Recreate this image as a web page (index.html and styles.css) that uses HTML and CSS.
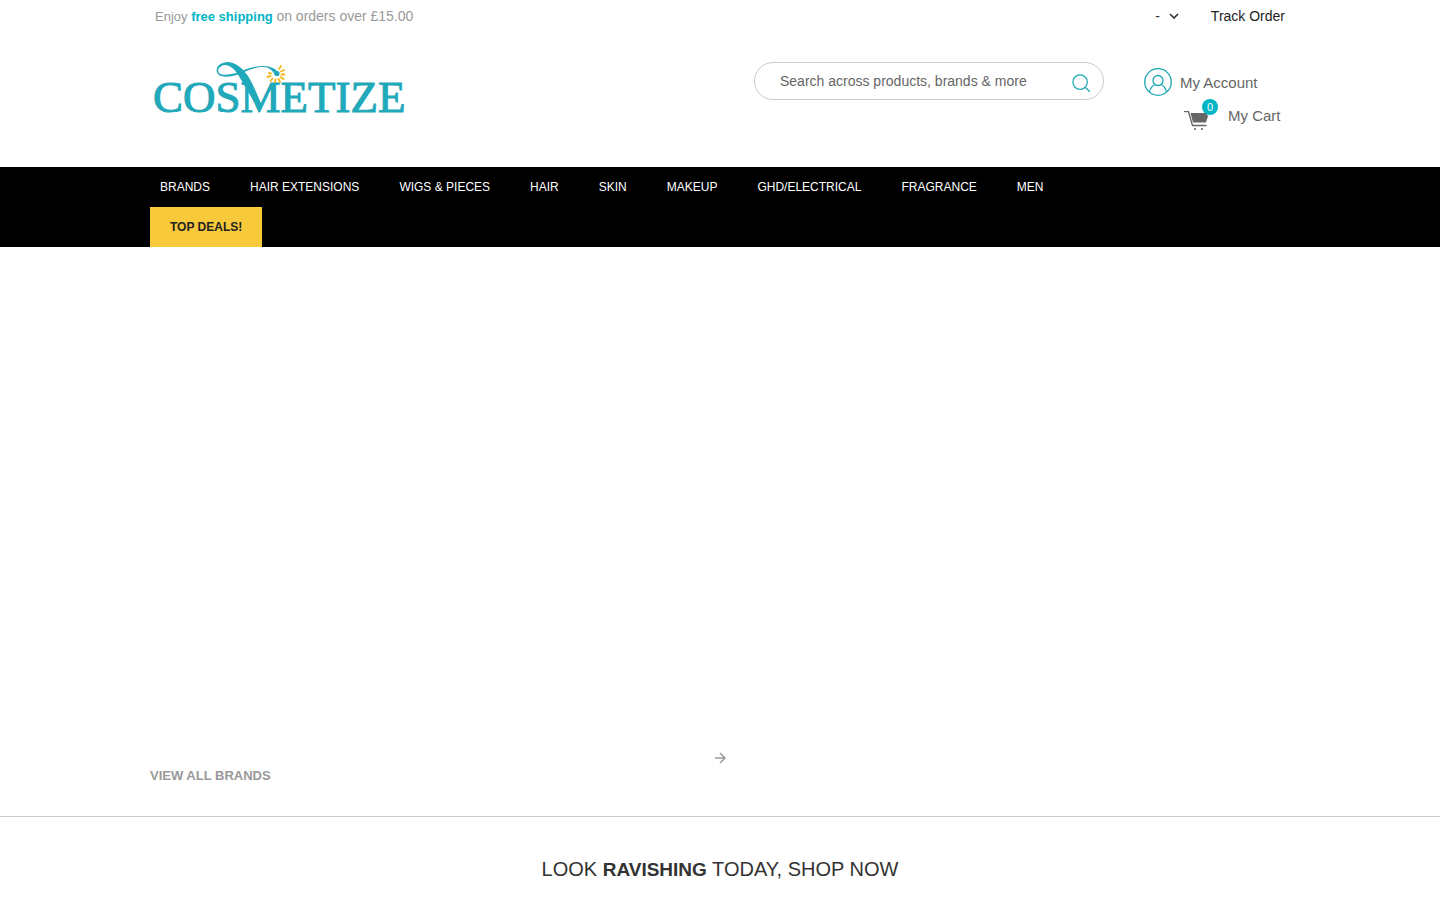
FILE: index.html
```html
<!DOCTYPE html>
<html lang="en">
<head>
  <meta charset="UTF-8">
  <meta name="viewport" content="width=device-width, initial-scale=1.0">
  <title>Cosmetize</title>
  <link rel="stylesheet" href="styles.css">
</head>
<body>
  <header>
    <div class="container topbar">
      <p class="shipping">Enjoy <strong>free shipping</strong> <span>on orders over £15.00</span></p>
      <div class="top-links">
        <button type="button" class="currency" aria-label="Currency">
          <span>-</span>
          <svg width="10" height="6" viewBox="0 0 10 6"><path d="M1 1l4 4 4-4" fill="none" stroke="#333" stroke-width="1.7"/></svg>
        </button>
        <a href="#" class="track">Track Order</a>
      </div>
    </div>

    <div class="container masthead">
      <a href="#" class="logo" aria-label="Cosmetize">
        <svg width="270" height="66" viewBox="0 0 270 66">
          <text x="3" y="50" class="logo-text">COSMETIZE</text>
          <path class="logo-fill" d="M110 50L90 16C86 8 80 3 75 3C69 4 67 8 69 11C72 14 80 13 89 10C97 7 104 4 113 4C121 4 126 7 129 11L126 14C122 8 119 5 113 5C104 5 97 9 90 12C81 15 71 16 68 12C64 7 69 0 78 0C87 1 92 6 98 14C103 22 108 34 112 44Z"/>
          <circle class="logo-fill" cx="127" cy="11.500" r="2.600"/>
          <path d="M129 7l2-3M131 9.500l3-1.500M131.500 12.500h3M130.500 15l3 2M128.500 17l1.500 3M125.500 17.500l-.5 2.500M122.500 16.500l-2 2.500M120.500 14l-3 1M121 11.500l-2-.5" stroke="#f5b81c" stroke-width="1.900" stroke-linecap="round"/>
        </svg>
      </a>
      <form class="search">
        <input type="text" name="q" aria-label="Search" placeholder="Search across products, brands &amp; more">
        <button type="submit" aria-label="Search">
          <svg width="18" height="18" viewBox="0 0 20 20" fill="none" stroke="#1ba8b5" stroke-width="1.4"><circle cx="9" cy="9" r="8"/><path d="M15 15l5 5"/></svg>
        </button>
      </form>
      <div class="user-links">
        <a href="#" class="account">
          <svg width="28" height="28" viewBox="0 0 28 28" fill="none" stroke="#1ba8b5" stroke-width="1.3"><circle cx="14" cy="14" r="13.3"/><circle cx="14" cy="12.5" r="5"/><path d="M5.500 24c1-4 3-6.500 5.500-7.500M22.500 24c-1-4-3-6.500-5.500-7.500"/></svg>
          My Account
        </a>
        <a href="#" class="cart">
          <span class="cart-icon">
            <svg width="25" height="22" viewBox="0 0 25 22"><path d="M0 2.700h4.500l4 13.800h14" fill="none" stroke="#666" stroke-width="1.300"/><path d="M6.500 4h15.500l2 3-2 6.500H9z" fill="#666"/><circle cx="11" cy="20" r="1.100" fill="#666"/><circle cx="18" cy="20" r="1.100" fill="#666"/></svg>
            <span class="badge">0</span>
          </span>
          My Cart
        </a>
      </div>
    </div>

    <nav class="nav">
      <div class="container">
        <ul class="menu">
          <li><a href="#">BRANDS</a></li>
          <li><a href="#">HAIR EXTENSIONS</a></li>
          <li><a href="#">WIGS &amp; PIECES</a></li>
          <li><a href="#">HAIR</a></li>
          <li><a href="#">SKIN</a></li>
          <li><a href="#">MAKEUP</a></li>
          <li><a href="#">GHD/ELECTRICAL</a></li>
          <li><a href="#">FRAGRANCE</a></li>
          <li><a href="#">MEN</a></li>
          <li><a href="#" class="deals">TOP DEALS!</a></li>
        </ul>
      </div>
    </nav>
  </header>

  <main>
    <section class="banner"></section>
    <section class="brands">
      <div class="container">
        <button type="button" class="next" aria-label="Next">
          <svg width="12" height="12" viewBox="0 0 12 12"><path d="M1 6h9M6 1l5 5-5 5" fill="none" stroke="#999" stroke-width="1.500"/></svg>
        </button>
        <a href="#" class="view-all">VIEW ALL BRANDS</a>
      </div>
    </section>
    <h2>LOOK <strong>RAVISHING</strong> TODAY, SHOP NOW</h2>
  </main>
</body>
</html>
```

FILE: styles.css
```css
* {
  box-sizing: border-box;
}
body {
  margin: 0;
  font-family: "Liberation Sans", Arial, sans-serif;
  font-size: 14px;
  color: #333;
  background: #fff;
}
a {
  color: inherit;
  text-decoration: none;
}
button {
  padding: 0;
  border: none;
  background: none;
  font: inherit;
  color: inherit;
  cursor: pointer;
}
svg {
  display: block;
}
.container {
  max-width: 1140px;
  margin: 0 auto;
}

/* top bar */
.topbar {
  display: flex;
  justify-content: space-between;
  align-items: center;
  height: 32px;
  padding: 0 5px;
}
.shipping {
  margin: 0;
  font-size: 13px;
  color: #999;
}
.shipping strong {
  color: #00b5c4;
}
.shipping span {
  font-size: 14px;
}
.top-links {
  display: flex;
  align-items: center;
  gap: 32px;
}
.currency {
  display: flex;
  align-items: center;
  gap: 9px;
}
.track {
  color: #222;
}

/* logo, search, account */
.masthead {
  display: flex;
  align-items: flex-start;
  height: 135px;
  padding-top: 30px;
}
.logo {
  margin-right: auto;
}
.logo-text {
  font-family: "Liberation Serif", "Times New Roman", serif;
  font-size: 45px;
  fill: #1fa9ba;
  stroke: #1fa9ba;
  stroke-width: 1px;
}
.logo-fill {
  fill: #1fa9ba;
}
.search {
  display: flex;
  align-items: center;
  width: 350px;
  height: 38px;
  padding: 0 13px 0 25px;
  border: 1px solid #ccc;
  border-radius: 19px;
}
.search input {
  flex: 1;
  min-width: 0;
  padding: 0;
  border: none;
  outline: none;
  background: none;
  font: inherit;
}
.search input::placeholder {
  color: #666;
  opacity: 1;
}
.search button {
  padding-top: 3px;
}
.user-links {
  width: 146px;
  margin-left: 40px;
  padding-top: 6px;
  font-size: 15px;
  color: #666;
}
.account {
  display: flex;
  align-items: center;
  gap: 8px;
}
.cart {
  display: flex;
  align-items: center;
  gap: 19px;
  margin-left: 40px;
  padding-top: 3px;
}
.cart-icon {
  position: relative;
  padding-top: 10px;
}
.badge {
  position: absolute;
  top: 0;
  left: 18px;
  width: 16px;
  height: 16px;
  border-radius: 50%;
  background: #00b5c4;
  color: #fff;
  font-size: 11px;
  line-height: 16px;
  text-align: center;
}

/* main menu */
.nav {
  background: #000;
}
.menu {
  display: flex;
  flex-wrap: wrap;
  max-width: 1000px;
  margin: 0;
  padding: 0;
  list-style: none;
}
.menu a {
  display: block;
  padding: 0 20px;
  font-size: 12px;
  line-height: 40px;
  color: #fff;
}
.menu li:first-child a {
  padding-left: 10px;
}
.menu .deals {
  background: #f8c93a;
  color: #222;
  font-weight: bold;
}

/* page content */
.banner {
  height: 500px;
}
.brands {
  padding: 5px 0 28px;
  border-bottom: 1px solid #ccc;
}
.next {
  display: block;
  margin: 0 auto;
}
.view-all {
  display: block;
  font-size: 13px;
  line-height: 24px;
  font-weight: bold;
  color: #999;
}
h2 {
  margin: 40px 0 0;
  font-size: 20px;
  font-weight: normal;
  line-height: 24px;
  text-align: center;
}
h2 strong {
  font-size: 19px;
}
```
